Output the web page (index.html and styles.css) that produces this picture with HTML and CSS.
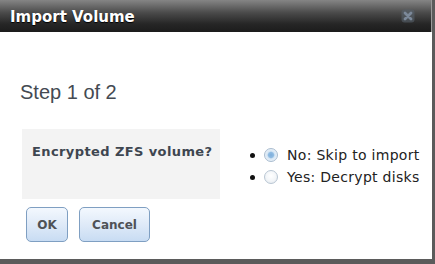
FILE: index.html
```html
<!DOCTYPE html>
<html>
<head>
<meta charset="utf-8">
<link rel="stylesheet" href="styles.css">
</head>
<body>
<div class="dialog">
  <div class="titlebar">
    <span class="title">Import Volume</span>
    <svg class="close" width="14" height="14" viewBox="0 0 14 14">
      <rect x="0.5" y="0.5" width="13" height="13" rx="3" fill="#56606b" opacity="0.6"/>
      <path d="M4 4 L10 10 M10 4 L4 10" stroke="#7b8899" stroke-width="2.8" stroke-linecap="round"/>
    </svg>
  </div>
  <div class="content">
    <h2 class="step">Step 1 of 2</h2>
    <div class="row">
      <div class="label-cell">Encrypted ZFS volume?</div>
      <ul class="choices">
        <li><span class="dot"></span><span class="radio checked"></span><span class="opt">No: Skip to import</span></li>
        <li><span class="dot"></span><span class="radio"></span><span class="opt">Yes: Decrypt disks</span></li>
      </ul>
    </div>
    <div class="buttons">
      <button class="btn ok">OK</button>
      <button class="btn cancel">Cancel</button>
    </div>
  </div>
</div>
</body>
</html>
```

FILE: styles.css
```css
html, body {
  margin: 0;
  padding: 0;
}
body {
  background: #5b5b5b;
  width: 435px;
  height: 264px;
  overflow: hidden;
}
.dialog {
  width: 432px;
  height: 259px;
  background: #ffffff;
  box-sizing: border-box;
}
.titlebar {
  height: 32px;
  box-sizing: border-box;
  padding: 0 16px 0 10px;
  display: flex;
  align-items: center;
  justify-content: space-between;
  background: linear-gradient(#858585 0%, #4a4a4a 40%, #262626 75%, #1c1c1c 100%);
  border-right: 1px solid #9a9a9a;
}
.title {
  font-family: "DejaVu Sans", Verdana, sans-serif;
  font-weight: bold;
  font-size: 15px;
  color: #ffffff;
  text-shadow: 0 1px 1px #000;
  margin-top: 1px;
}
.close {
  display: block;
  margin-top: 0;
}
.content {
  padding: 48px 0 0 0;
}
.step {
  margin: 0 0 0 20px;
  font-family: "Liberation Sans", Arial, sans-serif;
  font-weight: normal;
  font-size: 20px;
  line-height: 24px;
  color: #444a52;
}
.row {
  display: flex;
  align-items: flex-start;
  margin-top: 25px;
  margin-left: 22px;
}
.label-cell {
  width: 198px;
  height: 70px;
  box-sizing: border-box;
  background: #f3f3f3;
  padding: 15px 0 0 10px;
  font-family: "DejaVu Sans", Verdana, sans-serif;
  font-weight: bold;
  font-size: 13px;
  line-height: 16px;
  letter-spacing: 0.4px;
  color: #3e4650;
  white-space: nowrap;
}
.choices {
  list-style: none;
  margin: 0;
  padding: 15px 0 0 30px;
}
.choices li {
  display: flex;
  align-items: center;
  height: 22px;
  font-family: "DejaVu Sans", Verdana, sans-serif;
  font-size: 14px;
  letter-spacing: 0.3px;
  color: #222222;
}
.dot {
  width: 5px;
  height: 5px;
  border-radius: 50%;
  background: #111;
  margin-right: 9px;
}
.radio {
  width: 14px;
  height: 14px;
  box-sizing: border-box;
  border-radius: 50%;
  border: 1px solid #b9c6d3;
  background: radial-gradient(circle at 50% 40%, #ffffff 0%, #f2f5f8 55%, #dfe5eb 100%);
  margin-right: 9px;
}
.radio.checked {
  border-color: #a9bccf;
  background: radial-gradient(circle, #7eaedb 0%, #8fbbe2 30%, #d6e6f4 45%, #e8f0f8 70%, #cfdbe7 100%);
}
.buttons {
  display: flex;
  gap: 11px;
  margin: 8px 0 0 26px;
}
.btn {
  height: 35px;
  box-sizing: border-box;
  border: 1px solid #7f9fc2;
  border-radius: 5px;
  background: linear-gradient(#f3f8fe 0%, #dfeaf8 50%, #c8dcf3 100%);
  font-family: "DejaVu Sans", Verdana, sans-serif;
  font-weight: bold;
  font-size: 12px;
  color: #4f5256;
  padding: 0;
}
.ok {
  width: 42px;
}
.cancel {
  width: 71px;
}
```
